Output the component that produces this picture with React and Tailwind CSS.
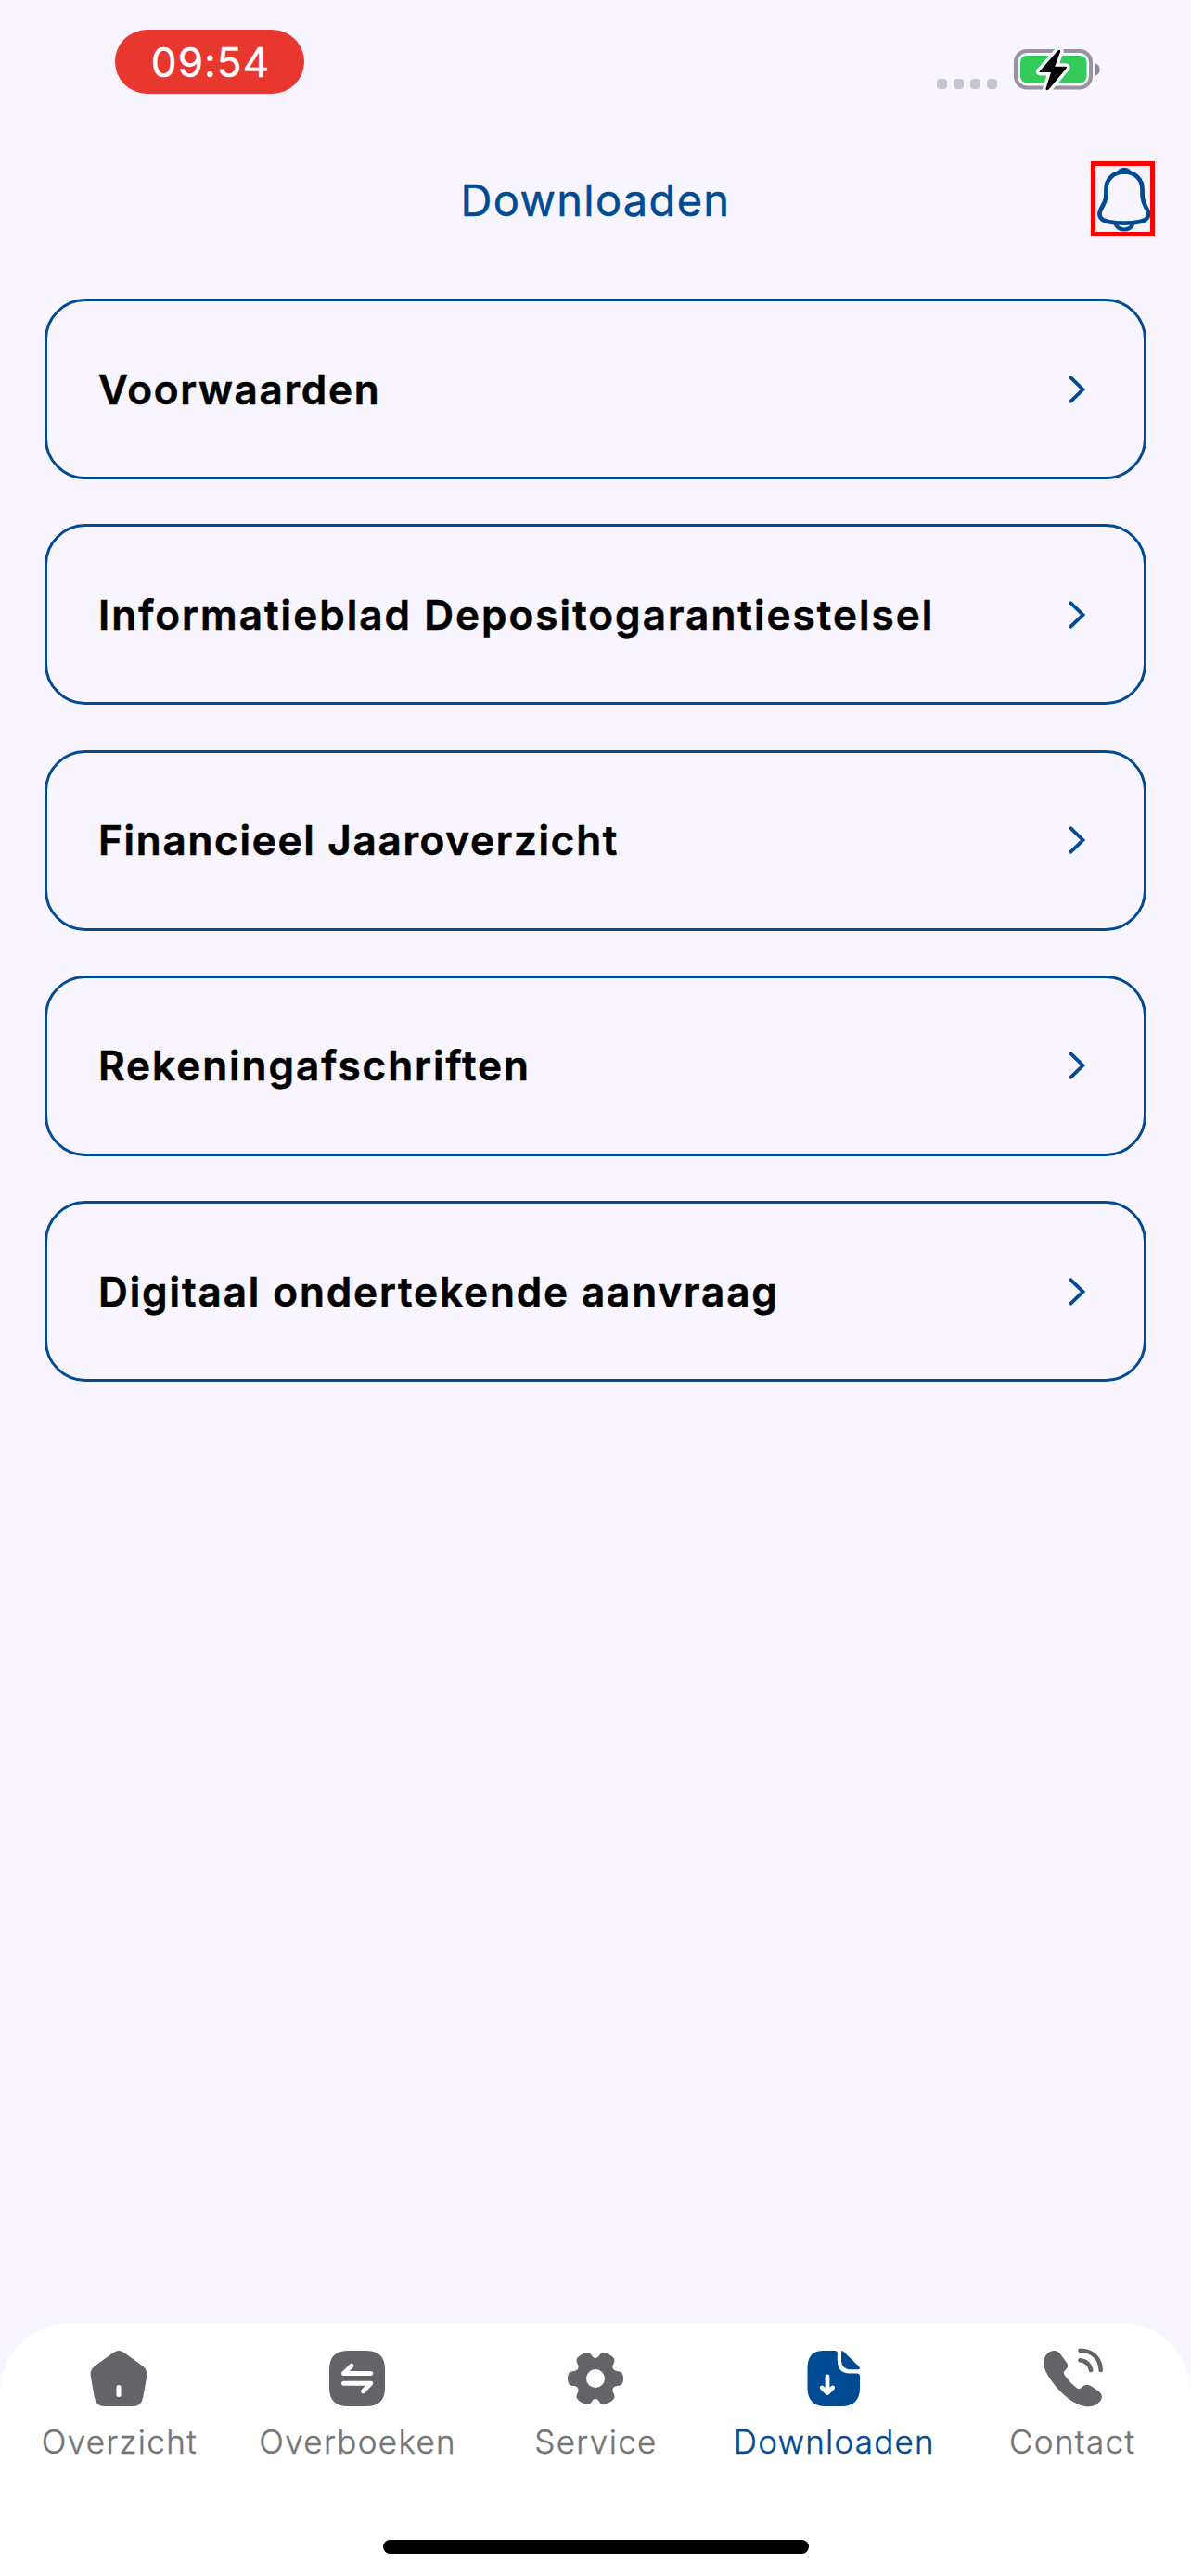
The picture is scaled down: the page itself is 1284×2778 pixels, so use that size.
const documents = [
  { label: 'Voorwaarden', tracking: 'tracking-[1.750px]' },
  { label: 'Informatieblad Depositogarantiestelsel', tracking: 'tracking-[2.040px]' },
  { label: 'Financieel Jaaroverzicht', tracking: 'tracking-[1.720px]' },
  { label: 'Rekeningafschriften', tracking: 'tracking-[1.980px]' },
  { label: 'Digitaal ondertekende aanvraag', tracking: 'tracking-[1.890px]' },
];

function HomeIcon() {
  return (
    <svg className="h-[72px] w-[72px]" viewBox="0 0 72 72" fill="none">
      <path
        d="M30 8.2Q36 4 42 8.2L61.5 22.2Q67.5 26.6 66.3 33.5L62.2 56.5Q60.5 66 51 66H21Q11.500 66 9.800 56.500L5.800 33.500Q4.500 26.600 10.500 22.200Z"
        fill="currentColor"
      />
      <path d="M36 45.500V53.500" stroke="white" strokeWidth="5" strokeLinecap="round" />
    </svg>
  );
}

function TransferIcon() {
  return (
    <svg className="h-[72px] w-[72px]" viewBox="0 0 72 72" fill="none">
      <path
        d="M6 26Q6 6 26 6H46Q66 6 66 26V46Q66 66 46 66H26Q6 66 6 46Z"
        fill="currentColor"
      />
      <path
        d="M50.700 30.600H21.500L30 22.200M21.500 41.300H50.700L42.500 49.700"
        stroke="white"
        strokeWidth="5"
        strokeLinecap="round"
        strokeLinejoin="round"
      />
    </svg>
  );
}

function GearIcon() {
  return (
    <svg className="h-[72px] w-[72px]" viewBox="0 0 72 72" fill="none">
      <path
        fillRule="evenodd"
        clipRule="evenodd"
        d="M32.200 11.600C34.200 14.900 37.800 14.900 39.800 11.600C41.200 8.600 43.500 7.200 46.500 8.200C50 9.300 52.500 10.700 55 13.200C57 15.300 56.800 17.800 55.300 20.500C53.200 24 55 27.600 59.300 27.900C63 28 65.300 29.800 65.700 32.800C66.100 35 66.100 37 65.700 39.200C65.300 42.200 63 44 59.300 44.100C55 44.400 53.200 48 55.300 51.500C56.800 54.200 57 56.700 55 58.800C52.500 61.300 50 62.700 46.500 63.800C43.500 64.800 41.200 63.400 39.800 60.400C37.800 57.100 34.200 57.100 32.200 60.400C30.800 63.400 28.500 64.800 25.500 63.800C22 62.700 19.500 61.300 17 58.800C15 56.700 15.200 54.200 16.700 51.500C18.800 48 17 44.400 12.700 44.100C9 44 6.700 42.200 6.300 39.200C5.900 37 5.900 35 6.300 32.800C6.700 29.800 9 28 12.700 27.900C17 27.600 18.800 24 16.700 20.500C15.200 17.800 15 15.300 17 13.200C19.500 10.700 22 9.300 25.500 8.200C28.500 7.200 30.800 8.600 32.200 11.600ZM36 26A10 10 0 1 0 36 46A10 10 0 1 0 36 26Z"
        fill="currentColor"
      />
    </svg>
  );
}

function DownloadIcon() {
  return (
    <svg className="h-[72px] w-[72px]" viewBox="0 0 72 72" fill="none">
      <path
        d="M24 6H37Q39.800 6 39.800 8.800V16Q39.800 30.500 53 30.500H61Q64 30.500 64 33.500V46Q64 66 44 66H27Q7.500 66 7.500 46V25Q7.500 6 24 6Z"
        fill="currentColor"
      />
      <path
        d="M44 8Q44 4.800 46.500 7L63 23Q65.500 26.300 62 26.300H55Q44 26.300 44 16Z"
        fill="currentColor"
      />
      <path
        d="M29 34V50.500M23.200 46L29 51.500L34.700 46"
        stroke="white"
        strokeWidth="4.800"
        strokeLinecap="round"
        strokeLinejoin="round"
      />
    </svg>
  );
}

function PhoneIcon() {
  return (
    <svg className="h-[72px] w-[72px]" viewBox="1.500 0 72 72" fill="none">
      <path
        d="M9.500 10.500C14 5 21.500 4.500 25 10L31.500 19C33.500 22 33 24 30.500 26.500C27.500 29 28 30.500 30 33.500C33.500 38.500 37.500 42.500 42 46C44.500 48 46 47.500 48 45.300C50.500 42.200 54.500 42 58 44.300L65.500 49.500C70.500 53 70.500 57.500 66.500 61.500C61 68 51 67.200 43 63.500C29.500 57 17 43.500 9.500 29.500C6 22.500 5.500 15.500 9.500 10.500Z"
        fill="currentColor"
      />
      <path
        d="M46 16.300C53 17.200 56.500 21 57.600 27M46 5.700C59 5.500 68 14.500 68.200 27"
        stroke="currentColor"
        strokeWidth="4.600"
        strokeLinecap="round"
      />
    </svg>
  );
}

const tabs = [
  { label: 'Overzicht', Icon: HomeIcon },
  { label: 'Overboeken', Icon: TransferIcon },
  { label: 'Service', Icon: GearIcon },
  { label: 'Downloaden', Icon: DownloadIcon, active: true },
  { label: 'Contact', Icon: PhoneIcon },
];

function Battery() {
  return (
    <svg className="h-[50px] w-[96px]" viewBox="0 0 96 50" fill="none">
      <rect x="2" y="6" width="81" height="39.500" rx="12" stroke="#98949f" strokeWidth="4" />
      <rect x="7" y="11" width="71.500" height="29.500" rx="7" fill="#34cb5b" />
      <path d="M88 19.500C94.200 21.500 94.200 30.500 88 32.500Z" fill="#8b8891" />
      <path
        d="M47.500 5.500L27.800 27.800Q27 29 28.500 29H40L34.500 46.500Q34.500 49.500 37.500 47.500L56.700 24.500Q57.800 22.800 55.500 22.800H44.200L50.200 6.500Q50 3.500 47.500 5.500Z"
        fill="black"
        stroke="#f8f5fe"
        strokeWidth="7"
        strokeLinejoin="round"
        paintOrder="stroke"
      />
    </svg>
  );
}

function Bell() {
  return (
    <svg className="h-[70px] w-[58px]" viewBox="0 0 58 70" fill="none">
      <path
        d="M30 5.500C18.500 5.500 10.500 13.500 10.500 23.500C10.500 32.500 10.500 35.500 7 41.500C4 47 2 51 4.800 55C9.500 62.500 50 62.500 54.700 55C57.500 51 55.500 47 52.500 41.500C49.500 35.500 49.500 32.500 49.500 23.500C49.500 13.500 41.500 5.500 30 5.500Z"
        stroke="#004b93"
        strokeWidth="4.700"
      />
      <path d="M22.500 7C24.500 -0.400 35.500 -0.400 37.500 7Z" fill="#004b93" stroke="#004b93" strokeWidth="1.500" />
      <path d="M20.500 61.500C24.500 69.500 35.500 69.500 39.500 61.500" stroke="#004b93" strokeWidth="4" />
    </svg>
  );
}

export default function App() {
  return (
    <div className="flex h-[2778px] w-[1284px] flex-col bg-[#f8f5fe] font-['Inter','Liberation_Sans',sans-serif]">
      <div className="flex h-[144px] shrink-0 items-start justify-between pl-[124px] pr-[95px]">
        <div className="mt-8 flex h-[69px] w-[204px] items-center justify-center rounded-full bg-[#e7372f] pl-[2px] text-[44px] leading-none tracking-[1.100px] text-white [-webkit-text-stroke:0.4px_currentColor]">
          09:54
        </div>
        <div className="mt-[49px] flex items-start">
          <div className="mr-[18px] mt-[36px] flex gap-[7px]">
            <span className="h-[11px] w-[11px] rounded-[4px] bg-[#c7c4d0]" />
            <span className="h-[11px] w-[11px] rounded-[4px] bg-[#c7c4d0]" />
            <span className="h-[11px] w-[11px] rounded-[4px] bg-[#c7c4d0]" />
            <span className="h-[11px] w-[11px] rounded-[4px] bg-[#c7c4d0]" />
          </div>
          <Battery />
        </div>
      </div>

      <header className="grid h-[178px] shrink-0 grid-cols-[1fr_auto_1fr] items-start pr-[39px]">
        <span className="w-[39px]" />
        <h1 className="mt-[44px] pl-[39px] text-[47px] font-normal leading-[56px] tracking-[1.300px] text-[#004b93] [-webkit-text-stroke:0.5px_currentColor]">
          Downloaden
        </h1>
        <button className="mt-[30px] flex h-[81px] w-[69px] items-center justify-center justify-self-end border-[5px] border-[#ff0000]">
          <Bell />
        </button>
      </header>

      <main className="flex grow flex-col gap-[48.330px] px-12">
        {documents.map(({ label, tracking }) => (
          <button
            key={label}
            className="flex h-[195px] w-full shrink-0 items-center justify-between rounded-[44px] border-[3px] border-[#004b93] pl-[55px] pr-[62px] text-left"
          >
            <span
              className={`text-[44px] font-semibold leading-none text-black [-webkit-text-stroke:0.6px_currentColor] ${tracking}`}
            >
              {label}
            </span>
            <svg className="h-[32px] w-[20px]" viewBox="0 0 20 32" fill="none">
              <path
                d="M3.500 3.300L16.500 16L3.500 28.700"
                stroke="#004b93"
                strokeWidth="3.800"
                strokeLinecap="round"
              />
            </svg>
          </button>
        ))}
      </main>

      <nav className="flex h-[273px] shrink-0 flex-col items-center rounded-t-[76px] bg-white">
        <div className="grid h-[234px] w-full grid-cols-5 pt-6">
          {tabs.map(({ label, Icon, active }) => (
            <button
              key={label}
              className={`flex flex-col items-center ${active ? 'text-[#004b93]' : 'text-[#646468]'}`}
            >
              <Icon />
              <span
                className={`ml-px mt-[10px] text-[35px] font-light leading-[44px] [-webkit-text-stroke:0.4px_currentColor] ${active ? 'tracking-[1.200px]' : 'tracking-[1.350px] text-[#757575]'}`}
              >
                {label}
              </span>
            </button>
          ))}
        </div>
        <div className="h-[15px] w-[459px] rounded-full bg-black" />
      </nav>
    </div>
  );
}
